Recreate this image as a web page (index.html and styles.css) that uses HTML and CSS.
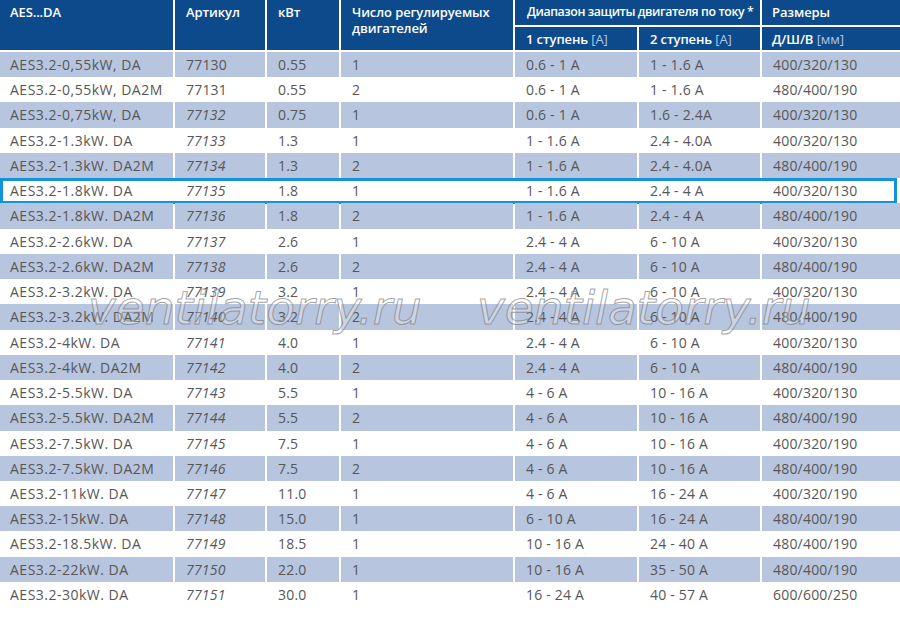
FILE: index.html
```html
<!DOCTYPE html>
<html lang="ru">
<head>
<meta charset="utf-8">
<title>AES...DA</title>
<link rel="stylesheet" href="styles.css">
</head>
<body>
<div class="page">
  <div class="table">
    <div class="thead">
      <div class="th c1 span2">AES...DA</div>
      <div class="th c2 span2">Артикул</div>
      <div class="th c3 span2">кВт</div>
      <div class="th c4 span2">Число регулируемых двигателей</div>
      <div class="th c56 nowrap">Диапазон защиты двигателя по току *</div>
      <div class="th c7">Размеры</div>
      <div class="th c5">1 ступень <span class="unit">[А]</span></div>
      <div class="th c6">2 ступень <span class="unit">[А]</span></div>
      <div class="th c7">Д/Ш/В <span class="unit">[мм]</span></div>
    </div>
    <div class="tbody">
      <div class="tr alt"><div class="td">AES3.2-0,55kW, DA</div><div class="td">77130</div><div class="td">0.55</div><div class="td">1</div><div class="td">0.6 - 1 A</div><div class="td">1 - 1.6 A</div><div class="td">400/320/130</div></div>
      <div class="tr"><div class="td">AES3.2-0,55kW, DA2M</div><div class="td">77131</div><div class="td">0.55</div><div class="td">2</div><div class="td">0.6 - 1 A</div><div class="td">1 - 1.6 A</div><div class="td">480/400/190</div></div>
      <div class="tr alt"><div class="td">AES3.2-0,75kW, DA</div><div class="td it">77132</div><div class="td">0.75</div><div class="td">1</div><div class="td">0.6 - 1 A</div><div class="td">1.6 - 2.4A</div><div class="td">400/320/130</div></div>
      <div class="tr"><div class="td">AES3.2-1.3kW. DA</div><div class="td it">77133</div><div class="td">1.3</div><div class="td">1</div><div class="td">1 - 1.6 A</div><div class="td">2.4 - 4.0A</div><div class="td">400/320/130</div></div>
      <div class="tr alt"><div class="td">AES3.2-1.3kW. DA2M</div><div class="td it">77134</div><div class="td">1.3</div><div class="td">2</div><div class="td">1 - 1.6 A</div><div class="td">2.4 - 4.0A</div><div class="td">480/400/190</div></div>
      <div class="tr selected"><div class="td">AES3.2-1.8kW. DA</div><div class="td it">77135</div><div class="td">1.8</div><div class="td">1</div><div class="td">1 - 1.6 A</div><div class="td">2.4 - 4 A</div><div class="td">400/320/130</div></div>
      <div class="tr alt"><div class="td">AES3.2-1.8kW. DA2M</div><div class="td it">77136</div><div class="td">1.8</div><div class="td">2</div><div class="td">1 - 1.6 A</div><div class="td">2.4 - 4 A</div><div class="td">480/400/190</div></div>
      <div class="tr"><div class="td">AES3.2-2.6kW. DA</div><div class="td it">77137</div><div class="td">2.6</div><div class="td">1</div><div class="td">2.4 - 4 A</div><div class="td">6 - 10 A</div><div class="td">400/320/130</div></div>
      <div class="tr alt"><div class="td">AES3.2-2.6kW. DA2M</div><div class="td it">77138</div><div class="td">2.6</div><div class="td">2</div><div class="td">2.4 - 4 A</div><div class="td">6 - 10 A</div><div class="td">480/400/190</div></div>
      <div class="tr"><div class="td">AES3.2-3.2kW. DA</div><div class="td it">77139</div><div class="td">3.2</div><div class="td">1</div><div class="td">2.4 - 4 A</div><div class="td">6 - 10 A</div><div class="td">400/320/130</div></div>
      <div class="tr alt"><div class="td">AES3.2-3.2kW. DA2M</div><div class="td it">77140</div><div class="td">3.2</div><div class="td">2</div><div class="td">2.4 - 4 A</div><div class="td">6 - 10 A</div><div class="td">480/400/190</div></div>
      <div class="tr"><div class="td">AES3.2-4kW. DA</div><div class="td it">77141</div><div class="td">4.0</div><div class="td">1</div><div class="td">2.4 - 4 A</div><div class="td">6 - 10 A</div><div class="td">400/320/130</div></div>
      <div class="tr alt"><div class="td">AES3.2-4kW. DA2M</div><div class="td it">77142</div><div class="td">4.0</div><div class="td">2</div><div class="td">2.4 - 4 A</div><div class="td">6 - 10 A</div><div class="td">480/400/190</div></div>
      <div class="tr"><div class="td">AES3.2-5.5kW. DA</div><div class="td it">77143</div><div class="td">5.5</div><div class="td">1</div><div class="td">4 - 6 A</div><div class="td">10 - 16 A</div><div class="td">400/320/130</div></div>
      <div class="tr alt"><div class="td">AES3.2-5.5kW. DA2M</div><div class="td it">77144</div><div class="td">5.5</div><div class="td">2</div><div class="td">4 - 6 A</div><div class="td">10 - 16 A</div><div class="td">480/400/190</div></div>
      <div class="tr"><div class="td">AES3.2-7.5kW. DA</div><div class="td it">77145</div><div class="td">7.5</div><div class="td">1</div><div class="td">4 - 6 A</div><div class="td">10 - 16 A</div><div class="td">400/320/190</div></div>
      <div class="tr alt"><div class="td">AES3.2-7.5kW. DA2M</div><div class="td it">77146</div><div class="td">7.5</div><div class="td">2</div><div class="td">4 - 6 A</div><div class="td">10 - 16 A</div><div class="td">480/400/190</div></div>
      <div class="tr"><div class="td">AES3.2-11kW. DA</div><div class="td it">77147</div><div class="td">11.0</div><div class="td">1</div><div class="td">4 - 6 A</div><div class="td">16 - 24 A</div><div class="td">400/320/190</div></div>
      <div class="tr alt"><div class="td">AES3.2-15kW. DA</div><div class="td it">77148</div><div class="td">15.0</div><div class="td">1</div><div class="td">6 - 10 A</div><div class="td">16 - 24 A</div><div class="td">480/400/190</div></div>
      <div class="tr"><div class="td">AES3.2-18.5kW. DA</div><div class="td it">77149</div><div class="td">18.5</div><div class="td">1</div><div class="td">10 - 16 A</div><div class="td">24 - 40 A</div><div class="td">480/400/190</div></div>
      <div class="tr alt"><div class="td">AES3.2-22kW. DA</div><div class="td it">77150</div><div class="td">22.0</div><div class="td">1</div><div class="td">10 - 16 A</div><div class="td">35 - 50 A</div><div class="td">480/400/190</div></div>
      <div class="tr"><div class="td">AES3.2-30kW. DA</div><div class="td it">77151</div><div class="td">30.0</div><div class="td">1</div><div class="td">16 - 24 A</div><div class="td">40 - 57 A</div><div class="td">600/600/250</div></div>
    </div>
  </div>
  <div class="watermark wm-left">ventilatorry.ru</div>
  <div class="watermark wm-right">ventilatorry.ru</div>
</div>
</body>
</html>
```

FILE: styles.css
```css
* { box-sizing: border-box; }

html, body {
  margin: 0;
  padding: 0;
  background: #ffffff;
}

.page {
  position: relative;
  width: 900px;
  height: 618px;
  overflow: hidden;
  font-family: "Open Sans", "Noto Sans", "DejaVu Sans", sans-serif;
}

.table {
  width: 900px;
}

.thead,
.tr {
  display: grid;
  grid-template-columns: 173px 90px 72px 172px 122px 121px 138px;
  column-gap: 2px;
}

.thead {
  grid-template-rows: 25px 23px;
  row-gap: 2px;
  margin-bottom: 2px;
}

.th {
  background: #0d4a8b;
  color: #ffffff;
  font-size: 13px;
  font-weight: 600;
  line-height: 16px;
  padding: 4px 8px 0 11px;
  letter-spacing: -0.1px;
}

.th.c1 { padding-left: 10px; }
.th.span2 { grid-row: span 2; }
.th.c56 {
  grid-column: 5 / span 2;
  font-size: 12.3px;
  letter-spacing: -0.4px;
  padding-left: 12px;
}
.th.c7 { padding-left: 10px; }
.nowrap { white-space: nowrap; }

.unit {
  font-weight: 400;
  color: #b7c6e2;
}

.tr {
  height: 25.24px;
  position: relative;
}

.td {
  color: #575757;
  font-size: 14px;
  line-height: 25px;
  padding-left: 11px;
  white-space: nowrap;
  letter-spacing: 0.2px;
}

.td:first-child {
  padding-left: 10px;
  letter-spacing: 0.5px;
}

.tr.alt .td { background: #b8c5de; }

.td.it { font-style: italic; }

.tr.selected::after {
  content: "";
  position: absolute;
  left: 0;
  top: 0;
  right: 3px;
  bottom: -1px;
  border: 3px solid #1493dc;
  pointer-events: none;
}

.watermark {
  position: absolute;
  top: 283px;
  font-family: "DejaVu Sans", sans-serif;
  font-style: oblique;
  font-size: 47px;
  line-height: 50px;
  color: rgba(255, 255, 255, 0.3);
  -webkit-text-stroke: 1px rgba(125, 125, 125, 0.7);
  pointer-events: none;
  white-space: nowrap;
}

.wm-left { left: 88px; }
.wm-right { left: 477px; }
```
